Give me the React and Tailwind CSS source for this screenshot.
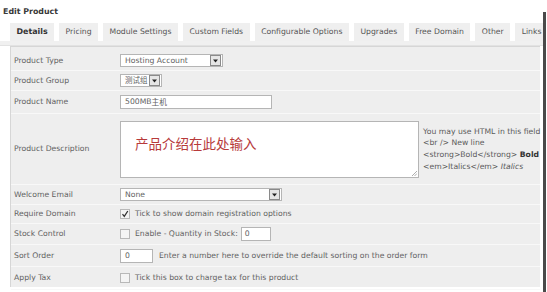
import React from 'react'

const tabs = ['Details', 'Pricing', 'Module Settings', 'Custom Fields', 'Configurable Options', 'Upgrades', 'Free Domain', 'Other', 'Links']

function DropButton() {
  return (
    <span className="flex h-[11px] w-[11px] shrink-0 items-center justify-center border border-[#8a8a8a] bg-[#e6e6e6]">
      <svg width="5" height="4" viewBox="0 0 5 4">
        <path d="M0 0.5 L5 0.5 L2.5 3.5 Z" fill="#222" />
      </svg>
    </span>
  )
}

function Select({ className, children }) {
  return (
    <div className={'flex h-[13px] items-center justify-between border border-[#b5b5b5] bg-white pl-[4px] pr-[1px] ' + className}>
      <span className="leading-none">{children}</span>
      <DropButton />
    </div>
  )
}

function Checkbox({ checked }) {
  return (
    <span className="flex h-[10px] w-[10px] shrink-0 items-center justify-center border border-[#b8b8b8] bg-[#f4f4f4]">
      {checked && (
        <svg width="8" height="8" viewBox="0 0 8 8">
          <path d="M1.5 4.2 L3.3 6.3 L6.8 1" fill="none" stroke="#333" strokeWidth="1.3" />
        </svg>
      )}
    </span>
  )
}

function Row({ label, h, children }) {
  return (
    <div className={'flex border-b border-[#f8f8f8] ' + h}>
      <div className="flex w-[107px] shrink-0 items-center pl-[3px]">{label}</div>
      <div className="flex flex-1 items-center pl-[2px]">{children}</div>
    </div>
  )
}

export default function App() {
  return (
    <div className="flex h-[292px] w-[547px] overflow-hidden bg-white font-['DejaVu_Sans',sans-serif] text-[7.7px] text-[#626262]">
      <div className="flex w-[543px] shrink-0 flex-col">
        <div className="pl-[3px] pt-[6px] h-[23px] text-[7.9px] font-bold text-[#3a3a3a]">Edit Product</div>

        <div className="flex h-[18px] gap-[5px] overflow-hidden pl-[10px]">
          {tabs.map((t, i) => (
            <div
              key={t}
              className={
                'flex shrink-0 items-center whitespace-nowrap bg-[#efefef] px-[6.5px] ' +
                (i === 0 ? 'font-bold text-[#333] text-[7.9px]' : 'text-[#555]')
              }
            >
              {t}
            </div>
          ))}
        </div>
        <div className="h-[5px] border-b border-[#e2e2e2] bg-[#f0f0f0]" />

        <div className="ml-[10px] mr-[3px] h-[241px] border-l border-t border-[#d6d6d6] bg-[#eeeeee] pt-[4px]">
          <Row label="Product Type" h="h-[20px]">
            <Select className="w-[103px]">Hosting Account</Select>
          </Row>
          <Row label="Product Group" h="h-[20px]">
            <Select className="w-[42px]">
              <span className="font-['Noto_Sans_CJK_SC',sans-serif] text-[7.5px]">测试组</span>
            </Select>
          </Row>
          <Row label="Product Name" h="h-[23px]">
            <div className="flex h-[14px] w-[152px] items-center border border-[#b5b5b5] bg-white pl-[4px]">
              500MB<span className="font-['Noto_Sans_CJK_SC',sans-serif]">主机</span>
            </div>
          </Row>
          <Row label="Product Description" h="h-[71px]">
            <div className="relative h-[57px] w-[299px] shrink-0 border border-[#b5b5b5] bg-white pl-[14px] pt-[13px]">
              <span className="font-['Noto_Sans_CJK_SC',sans-serif] text-[13.5px] leading-[16px] text-[#b73a3a]">产品介绍在此处输入</span>
              <svg className="absolute bottom-[1px] right-[1px]" width="6" height="6" viewBox="0 0 6 6">
                <path d="M1 6 L6 1 M3.5 6 L6 3.5" stroke="#999" strokeWidth="0.8" />
              </svg>
            </div>
            <div className="ml-[4px] whitespace-nowrap leading-[11.7px] text-[#5a5a5a]">
              <div>You may use HTML in this field</div>
              <div>&lt;br /&gt; New line</div>
              <div>&lt;strong&gt;Bold&lt;/strong&gt; <b className="text-[#333]">Bold</b></div>
              <div>&lt;em&gt;Italics&lt;/em&gt; <i>Italics</i></div>
            </div>
          </Row>
          <Row label="Welcome Email" h="h-[20px]">
            <Select className="w-[162px]">None</Select>
          </Row>
          <Row label="Require Domain" h="h-[19px]">
            <Checkbox checked />
            <span className="ml-[5px]">Tick to show domain registration options</span>
          </Row>
          <Row label="Stock Control" h="h-[21px]">
            <Checkbox />
            <span className="ml-[5px]">Enable - Quantity in Stock:</span>
            <div className="ml-[3px] flex h-[14px] w-[30px] items-center border border-[#b5b5b5] bg-white pl-[3px]">0</div>
          </Row>
          <Row label="Sort Order" h="h-[22px]">
            <div className="flex h-[14px] w-[33px] items-center border border-[#b5b5b5] bg-white pl-[4px]">0</div>
            <span className="ml-[6px]">Enter a number here to override the default sorting on the order form</span>
          </Row>
          <Row label="Apply Tax" h="h-[23px]">
            <Checkbox />
            <span className="ml-[5px]">Tick this box to charge tax for this product</span>
          </Row>
        </div>
      </div>
      <div className="mt-[12px] w-[3px] bg-[#4a4a4a]" />
    </div>
  )
}
